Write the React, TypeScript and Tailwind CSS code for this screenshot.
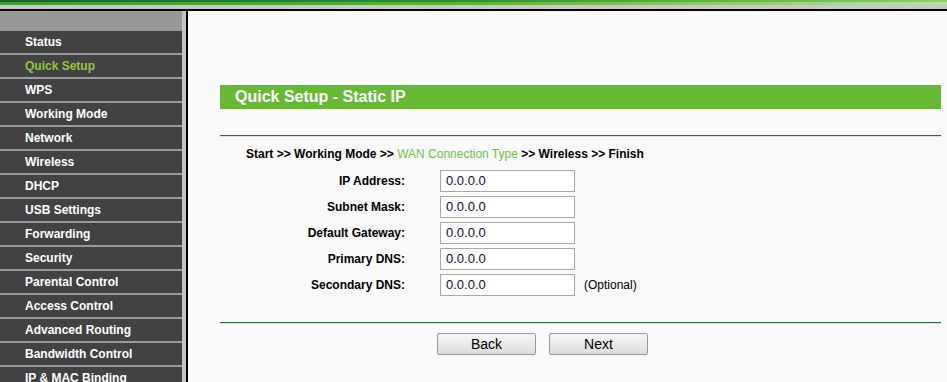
const menuItems = [
  "Status",
  "Quick Setup",
  "WPS",
  "Working Mode",
  "Network",
  "Wireless",
  "DHCP",
  "USB Settings",
  "Forwarding",
  "Security",
  "Parental Control",
  "Access Control",
  "Advanced Routing",
  "Bandwidth Control",
  "IP & MAC Binding",
];

const fields = [
  { label: "IP Address:", value: "0.0.0.0" },
  { label: "Subnet Mask:", value: "0.0.0.0" },
  { label: "Default Gateway:", value: "0.0.0.0" },
  { label: "Primary DNS:", value: "0.0.0.0" },
  { label: "Secondary DNS:", value: "0.0.0.0", note: "(Optional)" },
];

function Divider() {
  return (
    <div>
      <div className="h-px bg-[#2d6b3a]" />
      <div className="h-px bg-[#d4e4d4]" />
    </div>
  );
}

export default function App() {
  const active = "Quick Setup";

  return (
    <div className="h-[382px] w-[947px] overflow-hidden bg-[#fafafa] font-['Liberation_Sans',Arial,sans-serif]">
      {/* top banner edge */}
      <div className="h-[2px] bg-gradient-to-r from-[#1f5e2c] via-[#3a8a36] to-[#8fcf70]" />
      <div className="h-[3px] bg-gradient-to-r from-[#3e9a34] via-[#5cb232] to-[#b8e4a0]" />
      <div className="h-[4px] bg-[#c8c8c8]" />
      <div className="h-[2px] bg-black" />

      <div className="flex">
        {/* sidebar */}
        <div className="w-[182px]">
          <div className="h-[20px] bg-[#989898]" />
          {menuItems.map((item) => (
            <div
              key={item}
              className={
                item === active
                  ? "h-[24px] border-b-2 border-[#9a9a9a] bg-[#424242] pl-[25px] text-[12px] font-bold leading-[22px] text-[#8fc93a]"
                  : "h-[24px] border-b-2 border-[#9a9a9a] bg-[#424242] pl-[25px] text-[12px] font-bold leading-[22px] text-white"
              }
            >
              {item}
            </div>
          ))}
        </div>
        <div className="w-[4px] bg-[#c4c4c4]" />
        <div className="w-[2px] bg-black" />

        {/* content */}
        <div className="flex-1 pl-[32px] pt-[74px]">
          <div className="w-[721px]">
            <div className="h-[24px] bg-[#67b934] pl-[15px] text-[16px] font-bold leading-[24px] text-white">
              Quick Setup - Static IP
            </div>

            <div className="mt-[26px]">
              <Divider />
            </div>

            <div className="mt-[9px] pl-[26px] text-[12px] leading-[16px] text-black">
              <span className="font-bold">Start &gt;&gt; Working Mode &gt;&gt; </span>
              <span className="text-[#6cc644]">WAN Connection Type</span>
              <span className="font-bold"> &gt;&gt; Wireless &gt;&gt; Finish</span>
            </div>

            <div className="mt-[8px] flex flex-col gap-[4px]">
              {fields.map((f) => (
                <div key={f.label} className="flex h-[22px] items-center">
                  <div className="w-[185px] text-right text-[12px] font-bold text-black">
                    {f.label}
                  </div>
                  <div className="ml-[35px] h-[22px] w-[135px] border border-[#a9a9a9] bg-white pl-[5px] text-[13px] leading-[20px] text-[#1a0a2a]">
                    {f.value}
                  </div>
                  {f.note && (
                    <div className="ml-[9px] text-[12px] text-black">{f.note}</div>
                  )}
                </div>
              ))}
            </div>

            <div className="mt-[26px]">
              <Divider />
            </div>

            <div className="mt-[9px] flex gap-[13px] pl-[217px]">
              <button className="h-[22px] w-[99px] rounded-[2px] border border-[#9a9a9a] bg-gradient-to-b from-[#f8f8f8] to-[#dcdcdc] text-[14px] text-black">
                Back
              </button>
              <button className="h-[22px] w-[99px] rounded-[2px] border border-[#9a9a9a] bg-gradient-to-b from-[#f8f8f8] to-[#dcdcdc] text-[14px] text-black">
                Next
              </button>
            </div>
          </div>
        </div>
      </div>
    </div>
  );
}
